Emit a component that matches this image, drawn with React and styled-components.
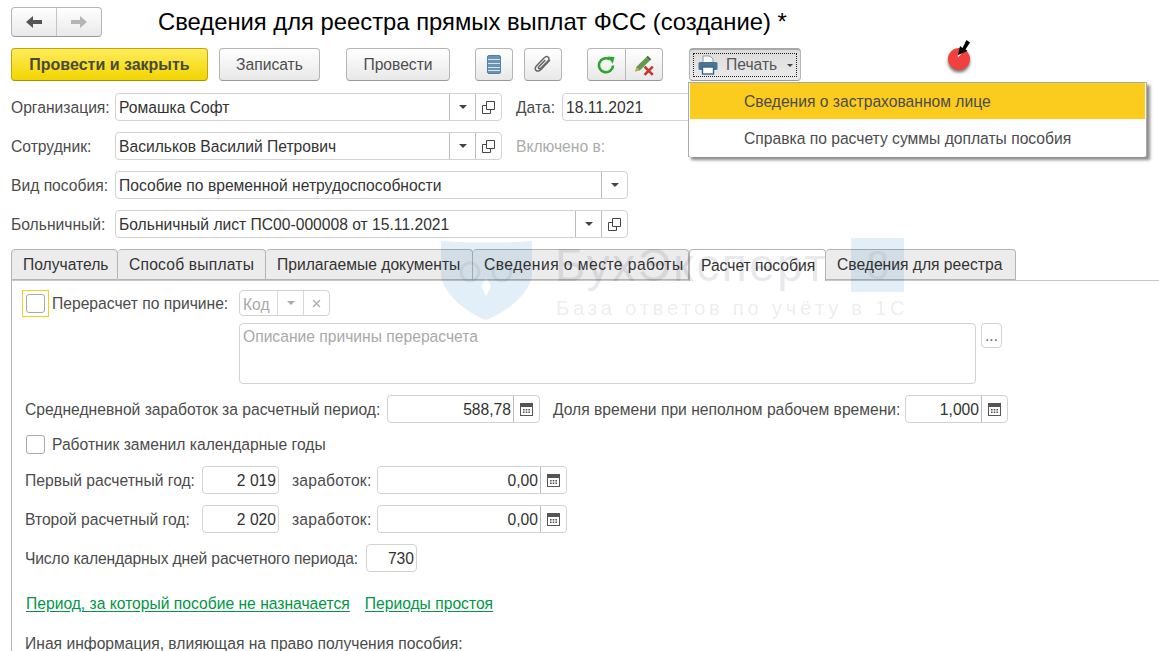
import React from 'react'
import styled, { createGlobalStyle, css } from 'styled-components'

const Global = createGlobalStyle`
  html, body { margin: 0; padding: 0; background: #fff; }
  body { font-family: "Liberation Sans", Arial, sans-serif; font-size: 15.65px; color: #4b4b4b; }
`

const Page = styled.div`
  position: relative;
  width: 1159px;
  height: 651px;
  overflow: hidden;
  padding: 7px 0 0 11px;
  box-sizing: border-box;
`

const Header = styled.div`
  display: flex;
  align-items: center;
  height: 30px;
`

const NavGroup = styled.div`
  display: flex;
  width: 91px;
  height: 30px;
  box-sizing: border-box;
  border: 1px solid #b5b5b5;
  border-bottom-color: #9a9a9a;
  border-radius: 4px;
  background: linear-gradient(#fff, #e9e9e9);
`

const NavBtn = styled.div`
  flex: 1;
  display: flex;
  align-items: center;
  justify-content: center;
  & + & { border-left: 1px solid #c4c4c4; }
`

const Title = styled.h1`
  margin: 0 0 0 56px;
  font-size: 23.8px;
  font-weight: 400;
  color: #000;
  white-space: nowrap;
`

const CommandBar = styled.div`
  display: flex;
  margin-top: 11px;
  height: 33px;
`

const buttonBase = css`
  display: flex;
  align-items: center;
  justify-content: center;
  box-sizing: border-box;
  height: 33px;
  border: 1px solid #b5b5b5;
  border-bottom-color: #999;
  border-radius: 4px;
  background: linear-gradient(#fff, #e8e8e8);
`

const Button = styled.div`
  ${buttonBase}
  width: ${p => p.$w}px;
  margin-left: ${p => p.$ml || 0}px;
  color: #4d4d4d;
`

const PrimaryButton = styled.div`
  ${buttonBase}
  width: 197px;
  background: linear-gradient(#ffec5c, #f2d500);
  border-color: #c4a800;
  border-bottom-color: #a89000;
  font-size: 16px;
  font-weight: 700;
  color: #4a4a3a;
`

const ButtonGroup = styled.div`
  ${buttonBase}
  width: 76px;
  margin-left: 25px;
`

const GroupCell = styled.div`
  flex: 1;
  height: 100%;
  display: flex;
  align-items: center;
  justify-content: center;
  & + & { border-left: 1px solid #b8b8b8; }
`

const PrintButton = styled.div`
  ${buttonBase}
  width: 112px;
  margin-left: 26px;
  padding: 3px;
  background: linear-gradient(#dcdcdc, #ebebeb);
  border-top: 2px solid #a8a8a8;
`

const PrintInner = styled.div`
  flex: 1;
  height: 100%;
  box-sizing: border-box;
  border: 1px dotted #222;
  display: flex;
  align-items: center;
  padding-left: 4px;
  gap: 8px;
  color: #555;
`

const Form = styled.div`
  display: flex;
  flex-direction: column;
  gap: 11px;
  margin-top: 12px;
`

const Row = styled.div`
  display: flex;
  align-items: center;
  height: 28px;
`

const Label = styled.span`
  white-space: nowrap;
  width: ${p => (p.$w ? `${p.$w}px` : 'auto')};
  margin-left: ${p => p.$ml || 0}px;
  padding-top: 2px;
  letter-spacing: ${p => p.$ls || 0}px;
  color: ${p => (p.$muted ? '#ababab' : '#4b4b4b')};
  flex-shrink: 0;
`

const Field = styled.div`
  display: flex;
  align-items: stretch;
  box-sizing: border-box;
  width: ${p => p.$w}px;
  height: ${p => p.$h || 28}px;
  margin-left: ${p => p.$ml || 0}px;
  border: 1px solid #d2d2d2;
  border-radius: 4px;
  background: #fff;
  flex-shrink: 0;
`

const Value = styled.div`
  flex: 1;
  min-width: 0;
  padding: 0 ${p => (p.$right ? 2 : 3)}px 0 3px;
  line-height: 28px;
  white-space: nowrap;
  overflow: hidden;
  color: ${p => (p.$muted ? '#a9a9a9' : '#333')};
  text-align: ${p => (p.$right ? 'right' : 'left')};
`

const FieldBtn = styled.div`
  width: 25px;
  display: flex;
  align-items: center;
  justify-content: center;
  border-left: 1px solid ${p => (p.$light ? '#d8d8d8' : '#bdbdbd')};
  flex-shrink: 0;
`

const Caret = styled.i`
  width: 0;
  height: 0;
  border-left: 4px solid transparent;
  border-right: 4px solid transparent;
  border-top: 4px solid ${p => (p.$muted ? '#aaa' : '#444')};
`

const SmallCaret = styled(Caret)`
  border-left-width: 3px;
  border-right-width: 3px;
  border-top-width: 3px;
  margin-left: 2px;
`

const Tabs = styled.div`
  display: flex;
  height: 32px;
  margin-top: 11px;
`

const Tab = styled.div`
  box-sizing: border-box;
  width: ${p => p.$w}px;
  height: ${p => (p.$active ? 32 : 31)}px;
  padding: 1px 0 0 11px;
  display: flex;
  align-items: center;
  white-space: nowrap;
  letter-spacing: ${p => p.$ls || 0}px;
  background: ${p => (p.$active ? '#fff' : '#ececec')};
  border: 1px solid #b4b4b4;
  border-left-width: ${p => (p.$first || p.$active ? 1 : 0)}px;
  border-bottom: ${p => (p.$active ? 'none' : '1px solid #b4b4b4')};
  border-radius: 4px 4px 0 0;
  color: #333;
  position: relative;
  z-index: ${p => (p.$active ? 1 : 0)};
`

const Panel = styled.div`
  margin-top: -1px;
  height: 400px;
  box-sizing: border-box;
  border-top: 1px solid #c8c8c8;
  border-left: 1px solid #b4b4b4;
  padding: 9px 0 0 10px;
`

const ReasonBlock = styled.div`
  display: flex;
  align-items: flex-start;
`

const CheckFocus = styled.div`
  width: 27px;
  height: 27px;
  box-sizing: border-box;
  border: 1px solid #f9cc1c;
  display: flex;
  align-items: center;
  justify-content: center;
  flex-shrink: 0;
`

const Check = styled.div`
  width: 19px;
  height: 19px;
  box-sizing: border-box;
  border: 1px solid #a8a8a8;
  border-radius: 3px;
  background: #fff;
  flex-shrink: 0;
`

const ReasonLabel = styled(Label)`
  width: 187px;
  margin-left: 3px;
  padding-top: 1px;
  line-height: 26px;
`

const ReasonFields = styled.div`
  display: flex;
  flex-direction: column;
  gap: 7px;
`

const DescRow = styled.div`
  display: flex;
  align-items: flex-start;
  gap: 5px;
`

const Desc = styled.div`
  box-sizing: border-box;
  width: 737px;
  height: 61px;
  border: 1px solid #d2d2d2;
  border-radius: 4px;
  padding: 4px 3px;
  color: #a9a9a9;
`

const DotsBtn = styled.div`
  box-sizing: border-box;
  width: 21px;
  height: 25px;
  border: 1px solid #d2d2d2;
  border-radius: 4px;
  text-align: center;
  line-height: 24px;
  color: #666;
`

const DataRow = styled(Row)`
  margin-top: ${p => p.$mt}px;
  margin-left: 3px;
`

const CheckRow = styled.div`
  display: flex;
  align-items: center;
  gap: 7px;
  height: 18px;
  margin: 12px 0 0 4px;
`

const Links = styled.div`
  display: flex;
  gap: 15px;
  margin: 23px 0 0 4px;
`

const Link = styled.span`
  color: #009646;
  text-decoration: underline;
  text-underline-offset: 2px;
`

const Note = styled.div`
  margin: 22px 0 0 3px;
  white-space: nowrap;
`

const Menu = styled.div`
  position: absolute;
  left: 688px;
  top: 82px;
  width: 459px;
  height: 75px;
  box-sizing: border-box;
  padding: 0 1px;
  border: 1px solid #aaa;
  background: #fff;
  box-shadow: 3px 3px 3px #8a8a8a;
  z-index: 5;
`

const MenuItem = styled.div`
  height: ${p => (p.$active ? 36 : 37)}px;
  line-height: 38px;
  margin-top: ${p => (p.$active ? 0 : 1)}px;
  padding-left: 54px;
  background: ${p => (p.$active ? '#fbcb1e' : '#fff')};
  color: #4b4b4b;
`

const Target = styled.svg`
  position: absolute;
  left: 940px;
  top: 34px;
  overflow: visible;
`

const Watermark = styled.div`
  position: absolute;
  left: 440px;
  top: 238px;
  width: 470px;
  height: 84px;
  mix-blend-mode: multiply;
  pointer-events: none;
  z-index: 3;
`

const WmShield = styled.svg`
  position: absolute;
  left: 0;
  top: 0;
`

const WmBrand = styled.div`
  position: absolute;
  left: 115px;
  top: 2px;
  font-size: 46px;
  line-height: 50px;
  letter-spacing: 2.5px;
  color: #e9e8ec;
  white-space: nowrap;
`

const WmSquare = styled.div`
  position: absolute;
  left: 411px;
  top: 0;
  width: 53px;
  height: 54px;
  background: #e3eff8;
  color: #d6e2ec;
  font-size: 40px;
  line-height: 54px;
  text-align: center;
`

const WmSub = styled.div`
  position: absolute;
  left: 116px;
  top: 58px;
  font-size: 20.5px;
  line-height: 24px;
  letter-spacing: 3.6px;
  color: #eeeef0;
  white-space: nowrap;
`

const Arrow = ({ back, color }) => (
  <svg width="18" height="14" viewBox="0 0 18 14">
    <path
      transform={back ? undefined : 'matrix(-1 0 0 1 18 0)'}
      d="M1 7 L8 1 L8 5 L17 5 L17 9 L8 9 L8 13 Z"
      fill={color}
    />
  </svg>
)

const ListIcon = () => (
  <svg width="14" height="19" viewBox="0 0 14 19">
    <rect x="0.5" y="0.5" width="13" height="18" rx="1.5" fill="#6b94b4" stroke="#54809f" />
    <path d="M1 4.5h12M1 8.5h12M1 12.5h12M1 15.5h12" stroke="#d5e2ec" strokeWidth="1.2" />
  </svg>
)

const ClipIcon = () => (
  <svg width="18" height="19" viewBox="0 0 18 19" fill="none">
    <path
      d="M15.5 5.5 L7 14.5 C5.3 16.3 3 16.6 1.9 15.2 C0.8 13.9 1.3 12 2.8 10.4 L10 3 C11.4 1.5 13.2 1.2 14.3 2.2 C15.3 3.2 15 4.8 13.7 6.2 L7 13 C6.2 13.8 5.3 13.9 4.8 13.4 C4.3 12.9 4.5 12 5.2 11.3 L10.8 5.6"
      stroke="#666"
      strokeWidth="1.5"
      strokeLinecap="round"
    />
  </svg>
)

const RefreshIcon = () => (
  <svg width="18" height="18" viewBox="0 0 18 18" fill="none">
    <path d="M16 9.5 A7 7 0 1 1 12.8 3.4" stroke="#2da52d" strokeWidth="2.6" />
    <path d="M10.4 0.4 L17.4 1 L15.8 7.8 Z" fill="#2da52d" />
  </svg>
)

const PencilXIcon = () => (
  <svg width="22" height="22" viewBox="0 0 20 20" fill="none">
    <path d="M2 16 L3.2 11.6 L12 3 L15.2 6.2 L6.4 14.8 Z" fill="#5f9a4e" />
    <path d="M2 16 L3.2 11.6 L6.4 14.8 Z" fill="#d6a25a" />
    <path d="M12 3 L13.4 1.6 L16.6 4.8 L15.2 6.2 Z" fill="#3f6e38" />
    <path d="M10.5 11.5 L18 19 M18 11.5 L10.5 19" stroke="#c8372d" strokeWidth="2.4" />
  </svg>
)

const PrinterIcon = () => (
  <svg width="20" height="20" viewBox="0 0 20 20">
    <path d="M5 1 H12 L15 4 V8 H5 Z" fill="#fff" stroke="#8a9aa8" />
    <rect x="0.5" y="7" width="19" height="8" rx="1.5" fill="#4b7394" />
    <rect x="4.5" y="12" width="11" height="7" fill="#fff" stroke="#3e6483" strokeWidth="1.4" />
  </svg>
)

const CopyIcon = () => (
  <svg width="13" height="13" viewBox="0 0 13 13" fill="none" stroke="#444">
    <path d="M4.5 0.5 H12.5 V8.5 H4.5 Z" />
    <path d="M4.5 4.5 H0.5 V12.5 H8.5 V8.5" />
  </svg>
)

const CalcIcon = () => (
  <svg width="13" height="13" viewBox="0 0 13 13">
    <rect x="0.5" y="0.5" width="12" height="12" fill="#fff" stroke="#555" />
    <rect x="1" y="1" width="11" height="3" fill="#555" />
    <path d="M3 6h1.6v1.4H3zM5.7 6h1.6v1.4H5.7zM8.4 6H10v1.4H8.4zM3 8.6h1.6V10H3zM5.7 8.6h1.6V10H5.7zM8.4 8.6H10V10H8.4z" fill="#555" />
  </svg>
)

const Cross = () => (
  <svg width="9" height="9" viewBox="0 0 9 9" stroke="#aaa" strokeWidth="1.2">
    <path d="M1 1 L8 8 M8 1 L1 8" />
  </svg>
)

const NumberField = ({ w, ml, value, h }) => (
  <Field $w={w} $ml={ml} $h={h}>
    <Value $right>{value}</Value>
    <FieldBtn><CalcIcon /></FieldBtn>
  </Field>
)

const tabs = [
  { name: 'Получатель', w: 107 },
  { name: 'Способ выплаты', w: 148, ls: 0.2 },
  { name: 'Прилагаемые документы', w: 207 },
  { name: 'Сведения о месте работы', w: 216, ls: 0.45 },
  { name: 'Расчет пособия', w: 137 },
  { name: 'Сведения для реестра', w: 190 },
]

export default function App() {
  return (
    <Page>
      <Global />
      <Header>
        <NavGroup>
          <NavBtn><Arrow back color="#555" /></NavBtn>
          <NavBtn><Arrow color="#b5b5b5" /></NavBtn>
        </NavGroup>
        <Title>Сведения для реестра прямых выплат ФСС (создание) *</Title>
      </Header>

      <CommandBar>
        <PrimaryButton>Провести и закрыть</PrimaryButton>
        <Button $w={101} $ml={11}>Записать</Button>
        <Button $w={104} $ml={26}>Провести</Button>
        <Button $w={38} $ml={25}><ListIcon /></Button>
        <Button $w={38} $ml={11}><ClipIcon /></Button>
        <ButtonGroup>
          <GroupCell><RefreshIcon /></GroupCell>
          <GroupCell><PencilXIcon /></GroupCell>
        </ButtonGroup>
        <PrintButton>
          <PrintInner>
            <PrinterIcon />
            Печать
            <SmallCaret />
          </PrintInner>
        </PrintButton>
      </CommandBar>

      <Form>
        <Row>
          <Label $w={104}>Организация:</Label>
          <Field $w={387}>
            <Value>Ромашка Софт</Value>
            <FieldBtn><Caret /></FieldBtn>
            <FieldBtn><CopyIcon /></FieldBtn>
          </Field>
          <Label $ml={14} $w={46}>Дата:</Label>
          <Field $w={140}><Value>18.11.2021</Value></Field>
        </Row>
        <Row>
          <Label $w={104}>Сотрудник:</Label>
          <Field $w={387}>
            <Value>Васильков Василий Петрович</Value>
            <FieldBtn><Caret /></FieldBtn>
            <FieldBtn><CopyIcon /></FieldBtn>
          </Field>
          <Label $ml={14} $muted>Включено в:</Label>
        </Row>
        <Row>
          <Label $w={104}>Вид пособия:</Label>
          <Field $w={513}>
            <Value>Пособие по временной нетрудоспособности</Value>
            <FieldBtn><Caret /></FieldBtn>
          </Field>
        </Row>
        <Row>
          <Label $w={104}>Больничный:</Label>
          <Field $w={513}>
            <Value>Больничный лист ПС00-000008 от 15.11.2021</Value>
            <FieldBtn><Caret /></FieldBtn>
            <FieldBtn><CopyIcon /></FieldBtn>
          </Field>
        </Row>
      </Form>

      <Tabs>
        {tabs.map(({ name, w, ls }, i) => (
          <Tab key={name} $w={w} $ls={ls} $first={i === 0} $active={i === 4}>{name}</Tab>
        ))}
      </Tabs>

      <Panel>
        <ReasonBlock>
          <CheckFocus><Check /></CheckFocus>
          <ReasonLabel>Перерасчет по причине:</ReasonLabel>
          <ReasonFields>
            <Field $w={91} $h={26}>
              <Value $muted>Код</Value>
              <FieldBtn $light><Caret $muted /></FieldBtn>
              <FieldBtn $light><Cross /></FieldBtn>
            </Field>
            <DescRow>
              <Desc>Описание причины перерасчета</Desc>
              <DotsBtn>...</DotsBtn>
            </DescRow>
          </ReasonFields>
        </ReasonBlock>

        <DataRow $mt={11}>
          <Label $w={362}>Среднедневной заработок за расчетный период:</Label>
          <NumberField w={153} value="588,78" />
          <Label $ml={13} $w={352}>Доля времени при неполном рабочем времени:</Label>
          <NumberField w={103} value="1,000" />
        </DataRow>

        <CheckRow>
          <Check />
          <Label>Работник заменил календарные годы</Label>
        </CheckRow>

        <DataRow $mt={13}>
          <Label $w={177}>Первый расчетный год:</Label>
          <Field $w={77}><Value $right>2 019</Value></Field>
          <Label $ml={13} $w={85} $ls={0.2}>заработок:</Label>
          <NumberField w={190} value="0,00" />
        </DataRow>
        <DataRow $mt={11}>
          <Label $w={177}>Второй расчетный год:</Label>
          <Field $w={77}><Value $right>2 020</Value></Field>
          <Label $ml={13} $w={85} $ls={0.2}>заработок:</Label>
          <NumberField w={190} value="0,00" />
        </DataRow>
        <DataRow $mt={11}>
          <Label $w={341} $ls={-0.15}>Число календарных дней расчетного периода:</Label>
          <Field $w={51}><Value $right>730</Value></Field>
        </DataRow>

        <Links>
          <Link>Период, за который пособие не назначается</Link>
          <Link>Периоды простоя</Link>
        </Links>

        <Note>Иная информация, влияющая на право получения пособия:</Note>
      </Panel>

      <Menu>
        <MenuItem $active>Сведения о застрахованном лице</MenuItem>
        <MenuItem>Справка по расчету суммы доплаты пособия</MenuItem>
      </Menu>

      <Target width="40" height="42" viewBox="0 0 40 42">
        <defs>
          <filter id="dotShadow" x="-40%" y="-40%" width="180%" height="180%">
            <feGaussianBlur stdDeviation="1.5" />
          </filter>
        </defs>
        <circle cx="19" cy="27.5" r="11" fill="#777" filter="url(#dotShadow)" />
        <circle cx="19" cy="25" r="11" fill="#f0413f" />
        <path d="M18 22.5 L26 13" stroke="#fff" strokeWidth="1.4" />
        <path d="M18 21 L20 12 L22.5 14 L26.5 6 L30 8.5 L25.5 15.5 L27.5 17 Z" fill="#000" />
      </Target>

      <Watermark>
        <WmShield width="94" height="84" viewBox="0 0 94 84">
          <path d="M1 3 C30 5 64 5 92 3 V38 C88 58 66 74 46 82 C26 74 5 58 1 38 Z" fill="#e3eff8" />
          <circle cx="30" cy="34" r="9" fill="none" stroke="#d3e2ee" strokeWidth="3" />
          <circle cx="62" cy="34" r="9" fill="none" stroke="#d3e2ee" strokeWidth="3" />
          <path d="M46 40 L41 48 L46 58 L51 48 Z" fill="#fff" />
        </WmShield>
        <WmBrand>БухЭксперт</WmBrand>
        <WmSquare>8</WmSquare>
        <WmSub>База ответов по учёту в 1С</WmSub>
      </Watermark>
    </Page>
  )
}
